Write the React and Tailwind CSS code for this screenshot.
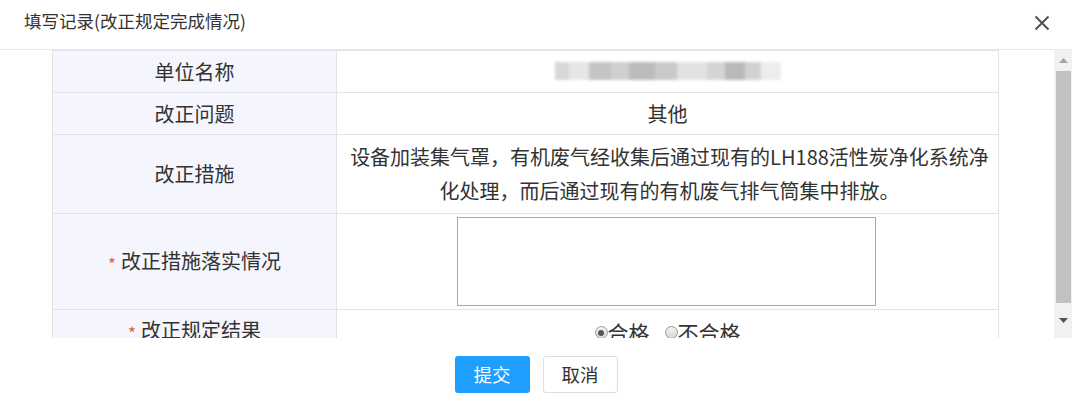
import React from "react";

const font = { fontFamily: '"Noto Sans CJK SC", "Noto Sans", sans-serif' };

const Radio = ({ checked, label }) => (
  <span className="inline-flex items-center">
    <span className="w-[13px] h-[13px] rounded-full border border-[#9a9a9a] bg-gradient-to-b from-[#f4f4f4] to-[#d6d6d6] flex items-center justify-center">
      {checked ? <span className="w-[6px] h-[6px] rounded-full bg-[#555]" /> : null}
    </span>
    <span className="text-[21px]">{label}</span>
  </span>
);

const Label = ({ children, required }) => (
  <td className="w-[284px] bg-[#f5f6fd] border border-[#e2e3ea] text-center p-0">
    {required ? <span className="text-[#e5603f] text-[17px] align-middle mr-[5px]">*</span> : null}
    {children}
  </td>
);

const Cell = ({ children, className = "" }) => (
  <td className={"border border-[#e2e3ea] text-center p-0 " + className}>{children}</td>
);

const Blurred = () => {
  // mosaic over the company name
  const blocks = [
    ["w-[14px]", "bg-[#d8d8d8]"],
    ["w-[20px]", "bg-[#e6e6e6]"],
    ["w-[22px]", "bg-[#c4c4c4]"],
    ["w-[18px]", "bg-[#cfcfcf]"],
    ["w-[26px]", "bg-[#bcbcbc]"],
    ["w-[22px]", "bg-[#c9c9c9]"],
    ["w-[30px]", "bg-[#e2e2e2]"],
    ["w-[18px]", "bg-[#d4d4d4]"],
    ["w-[20px]", "bg-[#b9b9b9]"],
    ["w-[16px]", "bg-[#d2d2d2]"],
    ["w-[20px]", "bg-[#ededed]"],
  ];
  return (
    <span className="inline-flex items-center h-[22px] blur-[1.5px]">
      {blocks.map(([w, bg], i) => (
        <span key={i} className={w + " h-[18px] " + bg} />
      ))}
    </span>
  );
};

export default function App() {
  return (
    <div style={font} className="w-[1072px] h-[408px] bg-white flex flex-col text-[#333] overflow-hidden">
      {/* title bar */}
      <div className="h-[50px] shrink-0 border-b border-[#e8e8e8] flex items-center justify-between pl-[24px] pr-[22px] pb-[6px]">
        <span className="text-[17.5px]">填写记录(改正规定完成情况)</span>
        <svg width="16" height="16" viewBox="0 0 16 16" className="mt-[2px]">
          <path d="M1.5 1.5 L14.5 14.5 M14.5 1.5 L1.5 14.5" stroke="#505050" strokeWidth="2" />
        </svg>
      </div>

      {/* content + scrollbar */}
      <div className="h-[288px] shrink-0 flex">
        <div className="flex-1 overflow-hidden pl-[52px]">
          <table className="border-collapse w-[947px] text-[20px] table-fixed">
            <tbody>
              <tr className="h-[42px]">
                <Label>单位名称</Label>
                <Cell><Blurred /></Cell>
              </tr>
              <tr className="h-[42px]">
                <Label>改正问题</Label>
                <Cell>其他</Cell>
              </tr>
              <tr className="h-[79px]">
                <Label>改正措施</Label>
                <Cell className="leading-[34px] whitespace-nowrap pl-[4px]">
                  设备加装集气罩，有机废气经收集后通过现有的LH188活性炭净化系统净
                  <br />
                  化处理，而后通过现有的有机废气排气筒集中排放。
                </Cell>
              </tr>
              <tr className="h-[96px]">
                <Label required>改正措施落实情况</Label>
                <Cell>
                  <div className="flex justify-center">
                    <textarea className="w-[419px] h-[89px] border border-[#a9a9a9] resize-none outline-none ml-[-2px]" />
                  </div>
                </Cell>
              </tr>
              <tr className="h-[42px]">
                <Label required>改正规定结果</Label>
                <Cell>
                  <span className="inline-flex items-center gap-[15px]">
                    <Radio checked label="合格" />
                    <Radio label="不合格" />
                  </span>
                </Cell>
              </tr>
            </tbody>
          </table>
        </div>
        <div className="w-[18px] shrink-0 bg-[#f1f1f1] flex flex-col items-center">
          <div className="h-[21px] flex items-center justify-center">
            <svg width="9" height="5" viewBox="0 0 9 5"><path d="M0 5 L4.5 0 L9 5 Z" fill="#a3a3a3" /></svg>
          </div>
          <div className="w-[15px] h-[232px] bg-[#c1c1c1]" />
          <div className="flex-1 flex items-center justify-center">
            <svg width="9" height="5" viewBox="0 0 9 5"><path d="M0 0 L4.5 5 L9 0 Z" fill="#505050" /></svg>
          </div>
        </div>
      </div>

      {/* buttons */}
      <div className="flex-1 flex justify-center items-start pt-[18px] gap-[13px] text-[18.5px]">
        <button className="w-[75px] h-[37px] rounded-[3px] bg-[#1e9fff] text-white">提交</button>
        <button className="w-[75px] h-[37px] rounded-[3px] bg-white border border-[#dedede] text-[#333]">取消</button>
      </div>
    </div>
  );
}
